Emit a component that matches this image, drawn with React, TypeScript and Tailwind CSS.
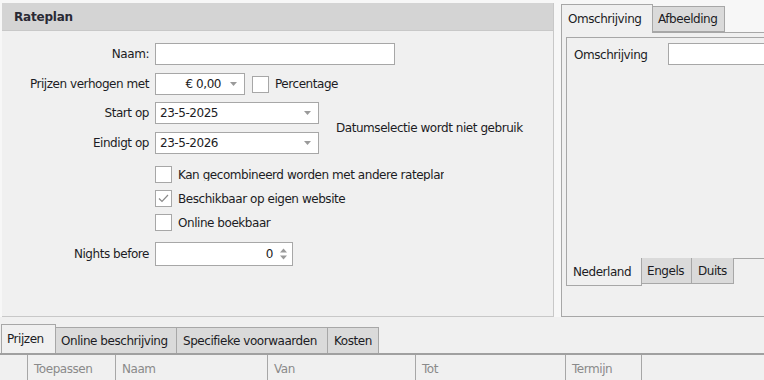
import React from "react";

const Arrow = () => (
  <svg width="7" height="4" viewBox="0 0 7 4" className="shrink-0">
    <path d="M0 0h7L3.5 4z" fill="#9a9a9a" />
  </svg>
);

function Combo({ value, w, right }: { value: string; w: string; right?: boolean }) {
  return (
    <div className={`${w} h-[22px] bg-white border border-[#a7a7a7] flex items-center pl-[4px] pr-[7px]`}>
      <span className={`flex-1 ${right ? "text-right pr-[9px]" : ""}`}>{value}</span>
      <Arrow />
    </div>
  );
}

function Check({ checked }: { checked?: boolean }) {
  return (
    <div className="w-[17px] h-[17px] bg-white border border-[#a7a7a7] flex items-center justify-center shrink-0">
      {checked && (
        <svg width="11" height="9" viewBox="0 0 11 9">
          <path d="M1 4.5l3 3L10 1" fill="none" stroke="#8a8a8a" strokeWidth="1.2" />
        </svg>
      )}
    </div>
  );
}

function Row({ label, children, className }: { label: string; children: React.ReactNode; className?: string }) {
  return (
    <div className={`flex items-center ${className ?? ""}`}>
      <div className="w-[153px] text-right pr-[6px]">{label}</div>
      {children}
    </div>
  );
}

export default function App() {
  return (
    <div className="w-[764px] h-[380px] overflow-hidden bg-[#f0f0f0] text-[#1c1c24] text-[12px] tracking-[-0.45px] font-['DejaVu_Sans',sans-serif] leading-none">
      <div className="flex h-[317px] pt-[3px] bg-[#f7f7f7]">
        {/* Rateplan */}
        <div className="ml-[2px] w-[552px] border-r border-b border-[#c8c8c8] bg-[#f0f0f0] flex flex-col">
          <div className="h-[28px] bg-[#d4d4d4] border-b border-[#c8c8c8] flex items-center pl-[12px] font-bold text-[12px] tracking-[-0.2px] text-[#2a2a35]">
            Rateplan
          </div>
          <div className="flex flex-col pt-[12px]">
            <Row label="Naam:">
              <div className="w-[240px] h-[22px] bg-white border border-[#a7a7a7]" />
            </Row>
            <Row label="Prijzen verhogen met" className="mt-[8px]">
              <Combo value="€ 0,00" w="w-[90px]" right />
              <div className="ml-[7px] flex items-center gap-[6px]">
                <Check />
                <span>Percentage</span>
              </div>
            </Row>
            <div className="flex mt-[7px]">
              <div className="flex flex-col gap-[8px]">
                <Row label="Start op">
                  <Combo value="23-5-2025" w="w-[164px]" />
                </Row>
                <Row label="Eindigt op">
                  <Combo value="23-5-2026" w="w-[164px]" />
                </Row>
              </div>
              <div className="ml-[17px] pt-[20px]">Datumselectie wordt niet gebruik</div>
            </div>
            <div className="flex flex-col gap-[7px] pl-[153px] mt-[12px]">
              <div className="flex items-center gap-[6px]">
                <Check />
                <span className="w-[266px] overflow-hidden whitespace-nowrap">Kan gecombineerd worden met andere rateplan</span>
              </div>
              <div className="flex items-center gap-[6px]">
                <Check checked />
                <span>Beschikbaar op eigen website</span>
              </div>
              <div className="flex items-center gap-[6px]">
                <Check />
                <span>Online boekbaar</span>
              </div>
            </div>
            <Row label="Nights before" className="mt-[11px]">
              <div className="w-[138px] h-[24px] bg-white border border-[#a7a7a7] flex items-center justify-end pr-[5px] gap-[7px]">
                <span>0</span>
                <svg width="7" height="12" viewBox="0 0 7 12">
                  <path d="M0 4.5h7L3.5 0.5z" fill="#9a9a9a" />
                  <path d="M0 7.5h7L3.5 11.5z" fill="#9a9a9a" />
                </svg>
              </div>
            </Row>
          </div>
        </div>

        {/* Right tabs */}
        <div className="ml-[7px] flex-1 flex flex-col bg-[#f0f0f0]">
          <div className="flex items-end h-[29px] bg-[#f7f7f7]">
            <div className="h-[29px] w-[92px] border border-b-0 border-[#a7a7a7] bg-[#f0f0f0] flex items-center pl-[6px] -mb-px relative z-10">
              Omschrijving
            </div>
            <div className="h-[26px] w-[72px] border border-l-0 border-[#a7a7a7] bg-[#dadada] flex items-center pl-[5px]">
              Afbeelding
            </div>
          </div>
          <div className="flex-1 border-l border-t border-b border-[#a7a7a7] pl-[4px] pt-[4px] pb-[30px] flex">
            <div className="flex-1 flex flex-col">
              <div className="flex-1 border-l border-t border-[#a7a7a7] flex items-start pt-[5px] pl-[7px]">
                <span className="mt-[6px]">Omschrijving</span>
                <div className="ml-[21px] flex-1 h-[22px] bg-white border border-[#a7a7a7] border-r-0" />
              </div>
              <div className="flex items-start h-[28px] border-t border-[#a7a7a7] -mt-px">
                <div className="h-[28px] w-[76px] border-l border-r border-b border-[#a7a7a7] bg-[#f0f0f0] flex items-center pl-[6px] -mt-px">
                  Nederland
                </div>
                <div className="h-[26px] w-[50px] border-r border-b border-[#a7a7a7] bg-[#dadada] flex items-center pl-[5px] -mt-px">
                  Engels
                </div>
                <div className="h-[26px] w-[42px] border-r border-b border-[#a7a7a7] bg-[#dadada] flex items-center pl-[6px] -mt-px">
                  Duits
                </div>
              </div>
            </div>
          </div>
        </div>
      </div>

      {/* Bottom tabs */}
      <div className="flex items-end h-[36px] pl-[1px]">
        <div className="h-[29px] w-[55px] border border-b-0 border-[#a7a7a7] bg-[#f0f0f0] flex items-center pl-[5px]">
          Prijzen
        </div>
        <div className="h-[26px] w-[121px] border border-l-0 border-b-0 border-[#a7a7a7] bg-[#dadada] flex items-center pl-[5px]">
          Online beschrijving
        </div>
        <div className="h-[26px] w-[151px] border border-l-0 border-b-0 border-[#a7a7a7] bg-[#dadada] flex items-center pl-[6px]">
          Specifieke voorwaarden
        </div>
        <div className="h-[26px] w-[51px] border border-l-0 border-b-0 border-[#a7a7a7] bg-[#dadada] flex items-center pl-[6px]">
          Kosten
        </div>
      </div>
      <div className="h-[2px] bg-[#a0a0a0]" />
      <div className="flex h-[26px] text-[#8a8a8a]">
        <div className="w-[28px] border-r border-[#a7a7a7]" />
        <div className="w-[88px] border-r border-[#a7a7a7] pl-[6px] pt-[8px]">Toepassen</div>
        <div className="w-[152px] border-r border-[#a7a7a7] pl-[6px] pt-[8px]">Naam</div>
        <div className="w-[148px] border-r border-[#a7a7a7] pl-[6px] pt-[8px]">Van</div>
        <div className="w-[150px] border-r border-[#a7a7a7] pl-[6px] pt-[8px]">Tot</div>
        <div className="w-[76px] border-r border-[#a7a7a7] pl-[6px] pt-[8px]">Termijn</div>
      </div>
    </div>
  );
}
